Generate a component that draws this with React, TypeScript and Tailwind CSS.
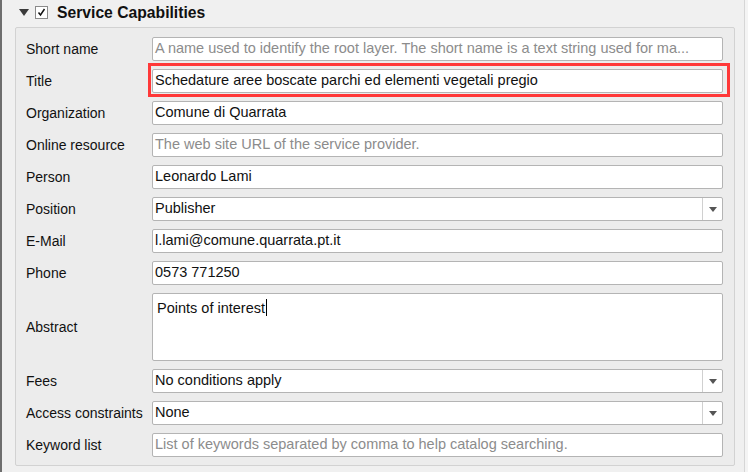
const font = { fontFamily: '"Liberation Sans", Arial, sans-serif' };

type Row = {
  label: string;
  value?: string;
  placeholder?: string;
  kind?: "text" | "combo" | "area";
};

const rows: Row[] = [
  { label: "Short name", placeholder: "A name used to identify the root layer. The short name is a text string used for ma..." },
  { label: "Title", value: "Schedature aree boscate parchi ed elementi vegetali pregio" },
  { label: "Organization", value: "Comune di Quarrata" },
  { label: "Online resource", placeholder: "The web site URL of the service provider." },
  { label: "Person", value: "Leonardo Lami" },
  { label: "Position", value: "Publisher", kind: "combo" },
  { label: "E-Mail", value: "l.lami@comune.quarrata.pt.it" },
  { label: "Phone", value: "0573 771250" },
  { label: "Abstract", value: "Points of interest", kind: "area" },
  { label: "Fees", value: "No conditions apply", kind: "combo" },
  { label: "Access constraints", value: "None", kind: "combo" },
  { label: "Keyword list", placeholder: "List of keywords separated by comma to help catalog searching." },
];

function Field({ row }: { row: Row }) {
  if (row.kind === "combo") {
    return (
      <div className="flex h-[24px] min-w-0 flex-1 items-stretch rounded-[2px] border border-[#b4b4b4] bg-white">
        <div className="flex flex-1 items-center pl-[2px] text-[14.5px] text-[#111]">{row.value}</div>
        <div className="flex w-[20px] items-center justify-center border-l border-[#d0d0d0]">
          <svg width="8" height="5" viewBox="0 0 8 5">
            <path d="M0 0h8L4 5z" fill="#555" />
          </svg>
        </div>
      </div>
    );
  }
  if (row.kind === "area") {
    return (
      <div className="h-[68px] min-w-0 flex-1 rounded-[2px] border border-[#b4b4b4] bg-white px-[4px] pt-[2px] text-[14.5px] text-[#111]">
        {row.value}
        <span className="ml-[1px] inline-block h-[17px] w-px translate-y-[3px] bg-black" />
      </div>
    );
  }
  return (
    <div className="flex h-[24px] min-w-0 flex-1 items-center overflow-hidden rounded-[2px] border border-[#b4b4b4] bg-white pl-[2px] pr-[4px] text-[14.5px]">
      <span className={`block min-w-0 whitespace-nowrap ${row.value ? "text-[#111]" : "text-[#8c8c8c]"}`}>
        {row.value ?? row.placeholder}
      </span>
    </div>
  );
}

export default function App() {
  return (
    <div className="relative h-[472px] w-[748px] overflow-hidden border-l-2 border-[#6e6e6e] bg-[#f0f0f0]" style={font}>
      <div className="flex h-full">
        <div className="min-w-0 flex-1 pl-[13px] pr-[9px]">
          {/* group header */}
          <div className="flex h-[27px] items-center pl-[4px] pb-[2px]">
            <svg width="10" height="7" viewBox="0 0 10 7">
              <path d="M0 0h10L5 7z" fill="#3a3a3a" />
            </svg>
            <div className="ml-[6px] flex h-[13px] w-[13px] items-center justify-center border border-[#8a8a8a] bg-white">
              <svg width="9" height="9" viewBox="0 0 9 9">
                <path d="M1.5 4.5l2 2.5 4-6" stroke="#111" strokeWidth="1.5" fill="none" />
              </svg>
            </div>
            <span className="ml-[9px] text-[15.7px] font-bold text-[#111]">Service Capabilities</span>
          </div>

          {/* group box */}
          <div className="flex h-[439px] flex-col gap-[8px] rounded-[2px] border border-[#d2d2d2] bg-[#ececec] pl-[10px] pr-[11px] pt-[9px]">
            {rows.map((row) => (
              <div key={row.label} className="flex items-center">
                <div className="w-[126px] shrink-0 text-[14px] text-[#111]">{row.label}</div>
                <Field row={row} />
              </div>
            ))}
          </div>
        </div>
        <div className="w-[4px] border-l border-[#d6d6d6] bg-[#f4f4f4]" />
      </div>

      {/* red highlight annotation */}
      <div className="pointer-events-none absolute left-[146px] top-[63px] h-[34px] w-[582px] border-[3px] border-[#ff3838]" />
    </div>
  );
}
